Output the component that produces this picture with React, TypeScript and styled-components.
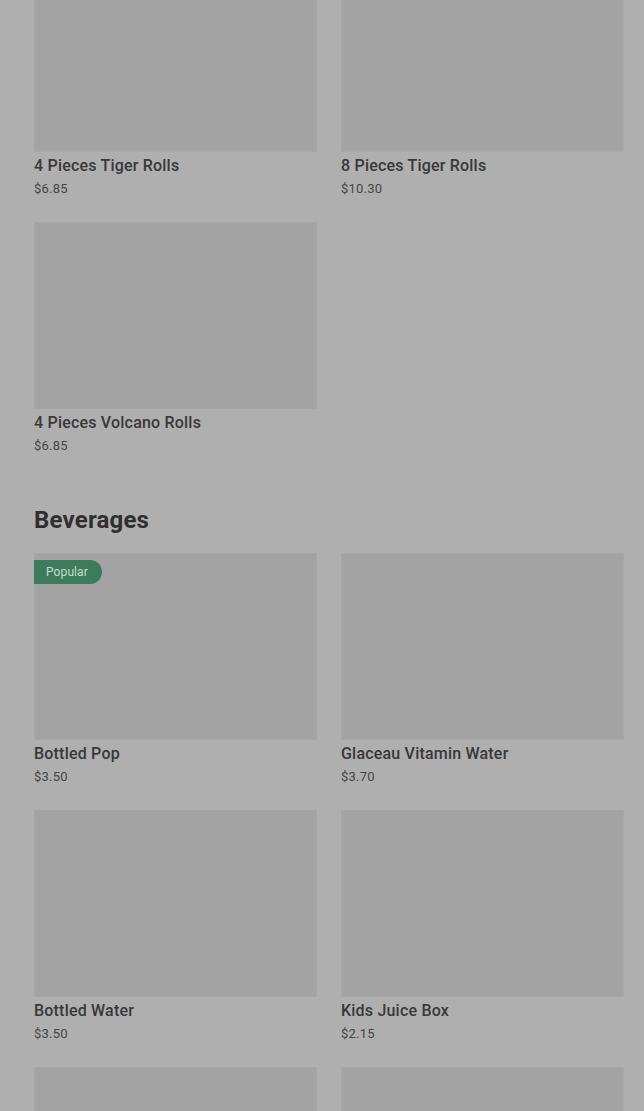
import styled, { createGlobalStyle } from 'styled-components';

type Item = {
  name: string;
  price: string;
  popular?: boolean;
};

type Section = {
  title?: string;
  items: Item[];
};

const sections: Section[] = [
  {
    items: [
      { name: '4 Pieces Tiger Rolls', price: '$6.85' },
      { name: '8 Pieces Tiger Rolls', price: '$10.30' },
      { name: '4 Pieces Volcano Rolls', price: '$6.85' },
    ],
  },
  {
    title: 'Beverages',
    items: [
      { name: 'Bottled Pop', price: '$3.50', popular: true },
      { name: 'Glaceau Vitamin Water', price: '$3.70' },
      { name: 'Bottled Water', price: '$3.50' },
      { name: 'Kids Juice Box', price: '$2.15' },
      { name: '', price: '' },
      { name: '', price: '' },
    ],
  },
];

const GlobalStyle = createGlobalStyle`
  html, body {
    margin: 0;
    padding: 0;
    background: #afafaf;
    overflow: hidden;
  }
  body {
    font-family: Roboto, "Liberation Sans", sans-serif;
  }
`;

const ItemCard = ({ item }: { item: Item }) => (
  <Card>
    <Photo>{item.popular && <Badge>Popular</Badge>}</Photo>
    {item.name && (
      <Info>
        <Name>{item.name}</Name>
        <Price>{item.price}</Price>
      </Info>
    )}
  </Card>
);

export default function App() {
  return (
    <>
      <GlobalStyle />
      <Page>
        {sections.map((section, i) => (
          <MenuSection key={i}>
            {section.title && <Heading>{section.title}</Heading>}
            <Grid>
              {section.items.map((item, j) => (
                <ItemCard key={j} item={item} />
              ))}
            </Grid>
          </MenuSection>
        ))}
      </Page>
    </>
  );
}

const Page = styled.main`
  display: flex;
  flex-direction: column;
  gap: 27px;
  padding: 0 20px 0 34px;
  margin-top: -35px;
  height: 1146px;
  overflow: hidden;
  background: #afafaf;
`;

const MenuSection = styled.section`
  display: flex;
  flex-direction: column;
  gap: 19px;
`;

const Heading = styled.h2`
  margin: 0;
  font-size: 24px;
  line-height: 28px;
  font-weight: 700;
  letter-spacing: 0.2px;
  color: #2f2f2f;
`;

const Grid = styled.div`
  display: grid;
  grid-template-columns: 283px 283px;
  column-gap: 24px;
`;

const Card = styled.div`
  display: flex;
  flex-direction: column;
  height: 257px;
`;

const Photo = styled.div`
  position: relative;
  flex: 0 0 187px;
  background: #a3a3a3;
  box-shadow: inset 0 0 0 1px #a7a7a7;
`;

const Badge = styled.span`
  position: absolute;
  top: 7px;
  left: 0;
  height: 24px;
  padding: 0 14px 0 12px;
  display: flex;
  align-items: center;
  border-radius: 0 12px 12px 0;
  background: #3c7b5b;
  color: #c8dcd0;
  font-size: 12px;
  letter-spacing: 0.1px;
`;

const Info = styled.div`
  display: flex;
  flex-direction: column;
  gap: 4px;
  padding-top: 4px;
`;

const Name = styled.div`
  font-size: 16px;
  line-height: 20px;
  font-weight: 500;
  letter-spacing: 0.2px;
  color: #383838;
`;

const Price = styled.div`
  font-size: 13px;
  line-height: 18px;
  letter-spacing: 0.2px;
  color: #454545;
`;
